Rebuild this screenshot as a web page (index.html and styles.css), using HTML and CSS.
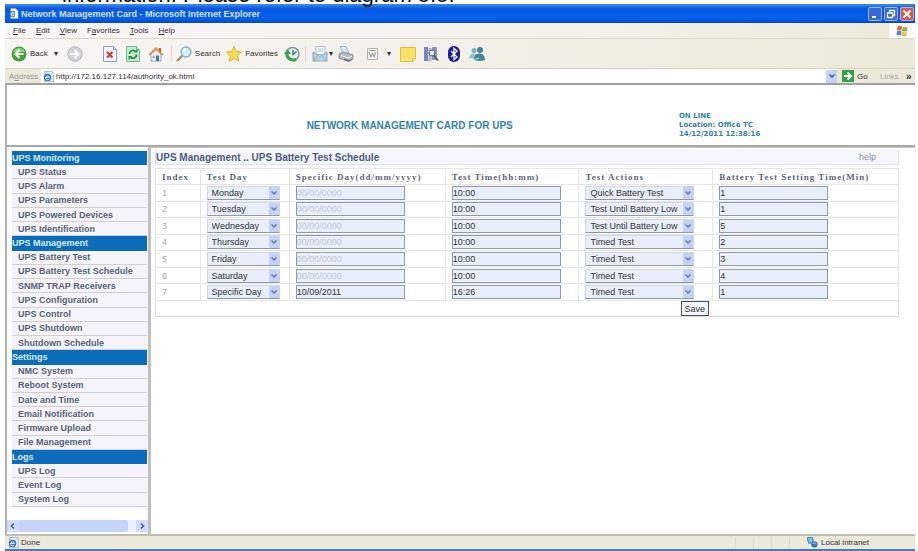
FILE: index.html
```html
<!DOCTYPE html>
<html lang="en">

<head>
    <meta charset="utf-8">
    <meta name="viewport" content="width=device-width, initial-scale=1.0">
    <title>Network Management Card</title>

    <link rel="stylesheet" href="styles.css">
</head>

<body>
    <p class="caption">information. Please refer to diagram 5.5.</p>

    <div class="window">
        <header class="titlebar">
            <svg class="icon-page" viewBox="0 0 12 12"><path d="M2 0h6l3 3v9H2z" fill="#fff"/><path d="M1 3h6v7H1z" fill="#3a7ac8"/><path d="M6 5.5a2 2 0 1 0 0 2.500M2.500 6.500h4" stroke="#fff" fill="none"/></svg>
            <h1>Network Management Card - Microsoft Internet Explorer</h1>
            <button class="win" aria-label="Minimize"><svg viewBox="0 0 12 12"><path d="M3 9h4" stroke="#fff" stroke-width="2"/></svg></button>
            <button class="win" aria-label="Restore"><svg viewBox="0 0 12 12"><path d="M4.500 4.500v-2h5v5h-2M2.500 5h5v4.500h-5z" stroke="#fff" stroke-width="1.300" fill="none"/></svg></button>
            <button class="win close" aria-label="Close"><svg viewBox="0 0 12 12"><path d="M2.500 2.500l7 7M9.500 2.500l-7 7" stroke="#fff" stroke-width="2"/></svg></button>
        </header>

        <nav class="menubar">
            <a href="#"><u>F</u>ile</a>
            <a href="#"><u>E</u>dit</a>
            <a href="#"><u>V</u>iew</a>
            <a href="#">F<u>a</u>vorites</a>
            <a href="#"><u>T</u>ools</a>
            <a href="#"><u>H</u>elp</a>
            <span class="flag"><svg viewBox="0 0 12 12"><path d="M1.500 1.500q2.500-1.500 4.500 0L5.500 5.500q-2-1.200-4.500 0z" fill="#d86a3c"/><path d="M6.500 1.800q2.500 1 5 0L11 6q-2.500 1-5 0z" fill="#8ab84a"/><path d="M1 6.200q2.500-1.200 4.500 0L5 10.500q-2-1.200-4.500 0z" fill="#5a80c8"/><path d="M6 6.800q2.500 1 5 0l-.5 4q-2.500 1-5 0z" fill="#e8c040"/></svg></span>
        </nav>

        <div class="toolbar">
            <button class="tool back"><svg viewBox="0 0 16 16"><circle cx="8" cy="8" r="7.500" fill="#3fa535"/><path d="M2 6a6.500 6.500 0 0 1 12 0z" fill="#8ed07c"/><path d="M12.500 8H5M8.500 4L4.500 8l4 4" stroke="#fff" stroke-width="2.200" fill="none"/></svg>Back</button>
            <span class="drop">▾</span>
            <button class="tool forward" aria-label="Forward"><svg viewBox="0 0 16 16"><circle cx="8" cy="8" r="7.200" fill="#d4d4d6" stroke="#b2b2b6"/><path d="M3.500 8H11M7.500 4l4 4-4 4" stroke="#fff" stroke-width="2" fill="none"/></svg></button>
            <button class="tool stop" aria-label="Stop"><svg viewBox="0 0 16 16"><path d="M1.500.500h10l3 3v12h-13z" fill="#f4f4fb" stroke="#8a9cc4"/><path d="M11.500.500v3h3" fill="#cdd8ee" stroke="#8a9cc4"/><path d="M5 6l5.500 5.500M10.500 6L5 11.500" stroke="#d23a2e" stroke-width="2.200"/></svg></button>
            <button class="tool refresh" aria-label="Refresh"><svg viewBox="0 0 16 16"><path d="M1.500.500h10l3 3v12h-13z" fill="#c9ecd0" stroke="#7ab494"/><path d="M11.500.500v3h3" fill="#eef8f0" stroke="#7ab494"/><path d="M4.500 8a3.500 3.500 0 0 1 5.500-3M11.500 8.500A3.500 3.500 0 0 1 6 11.500" stroke="#1f9240" stroke-width="1.800" fill="none"/><path d="M8.500 6.500h4v-4zM7.500 10h-4v4z" fill="#1f9240"/></svg></button>
            <button class="tool home" aria-label="Home"><svg viewBox="0 0 16 16"><path d="M3 8v7h10V8L8 3z" fill="#f0f2fa" stroke="#9aa6c8"/><path d="M11 2h2v4h-2z" fill="#c2562e"/><path d="M.500 8.500L8 1l7.500 7.500-1.500 1L8 4 2 9.500z" fill="#e08a3c"/><path d="M8 9.500h3V15H8z" fill="#4a72c0"/><path d="M4.500 9.500h2.200v2.500H4.500z" fill="#8ab4e0"/></svg></button>
            <button class="tool search"><svg viewBox="0 0 16 16"><path d="M6.500 9.500L1 15" stroke="#b08a62" stroke-width="2.400"/><circle cx="10" cy="6" r="5" fill="#d3ebfa" stroke="#8aaed0" stroke-width="1.400"/><path d="M7 5.500a3 3 0 0 1 3-2.500" stroke="#fff" stroke-width="1.500" fill="none"/></svg>Search</button>
            <button class="tool favorites"><svg viewBox="0 0 16 16"><path d="M8 .500l2.300 5 5.200.600-3.900 3.700 1.100 5.500L8 12.500l-4.700 2.800 1.100-5.500L.500 6.100l5.200-.600z" fill="#f7dc50" stroke="#dcae34"/></svg>Favorites</button>
            <button class="tool history" aria-label="History"><svg viewBox="0 0 16 16"><circle cx="8.500" cy="8" r="6.500" fill="#e2f2ee" stroke="#7a9c9c" stroke-width="1.500"/><path d="M9 4v4.500l3.500-3" stroke="#4a6a8a" stroke-width="1.300" fill="none"/><path d="M12 13.500A6.500 6.500 0 0 1 3 6.500" stroke="#3ca04c" stroke-width="3" fill="none"/><path d="M0 8l3.500-5L7 8z" fill="#3ca04c"/></svg></button>
            <button class="tool mail" aria-label="Mail"><svg viewBox="0 0 16 16"><path d="M4 .500h9v8H4z" fill="#fff" stroke="#a8bccc"/><path d="M5.500 3h6M5.500 5h6" stroke="#9cc4e0"/><path d="M1 6l7 4.500L15 6v9H1z" fill="#b9d4e6" stroke="#8aa8bc"/><path d="M1 15l5-5.500M15 15l-5-5.500" stroke="#8aa8bc"/></svg></button>
            <span class="drop small">▾</span>
            <button class="tool print" aria-label="Print"><svg viewBox="0 0 16 16"><path d="M2 .500h6l3 7H5z" fill="#d9ebfb" stroke="#9cb4d0"/><path d="M1 8l4-2 10 3v4l-5 2.500L1 12z" fill="#b4b8c0" stroke="#8a8e98"/><path d="M3 9.500l7 2.500 4-2" stroke="#fff" fill="none"/><path d="M6 13l5 2 3-1.500" stroke="#5a5e68" fill="none"/></svg></button>
            <button class="tool edit" aria-label="Edit"><svg viewBox="0 0 16 16"><path d="M3.500 2.500h10v11h-10z" fill="#f4f4f0" stroke="#b4b4b0"/><path d="M5 6l2 5 1.500-4 1.500 4 2-5M5.500 4.500h6" stroke="#8c9098" fill="none"/></svg></button>
            <span class="drop">▾</span>
            <button class="tool note" aria-label="Discuss"><svg viewBox="0 0 16 16"><path d="M.500 1.500h15v11l-3 3H.500z" fill="#fbe36a" stroke="#e0bc44"/><path d="M12.500 15.500v-3h3z" fill="#fff4b8" stroke="#e0bc44"/></svg></button>
            <button class="tool research" aria-label="Research"><svg viewBox="0 0 16 16"><path d="M1 1h4v14H1z" fill="#7a86b4"/><path d="M5.500 2h3v13h-3z" fill="#a9b0d0"/><path d="M9 1h5v13H9z" fill="#8e96b8"/><circle cx="9" cy="7" r="3" fill="#e6ecf8" stroke="#4e5888"/><path d="M11 9.500l4 5" stroke="#4e5888" stroke-width="1.800"/></svg></button>
            <button class="tool bluetooth" aria-label="Bluetooth"><svg viewBox="0 0 16 16"><rect x="2" width="12" height="16" rx="6" fill="#1c1c9c"/><path d="M5 5l6 6-3 2.500v-11L11 5l-6 6" stroke="#fff" stroke-width="1.300" fill="none"/></svg></button>
            <button class="tool messenger" aria-label="Messenger"><svg viewBox="0 0 16 16"><circle cx="5" cy="4.500" r="2.500" fill="#7cb4bc"/><path d="M0 12q1-6 7-4v5z" fill="#8fc2c8"/><circle cx="11" cy="4" r="3" fill="#3f8894"/><path d="M5 14q0-7 6-6.500 5 .500 5 6.500-5 2-11 0z" fill="#3f8894"/><path d="M1 12q5 3 9 0" stroke="#c4e4e4" fill="none"/></svg></button>
        </div>

        <form class="addressbar">
            <label for="address">A<u>d</u>dress</label>
            <div class="address">
                <svg viewBox="0 0 12 12"><path d="M2 0h7l3 3v9H2z" fill="#dce8f8" stroke="#7a9cc8"/><circle cx="5" cy="7" r="4" fill="#2c70c0"/><path d="M7 8.500a2.200 2.200 0 1 1 .200-1.500H3" stroke="#fff" fill="none"/></svg>
                <input id="address" type="text" value="http://172.16.127.114/authority_ok.html">
                <button type="button" class="pick" aria-label="Show addresses"><svg viewBox="0 0 8 8"><path d="M1.500 2.500L4 5l2.500-2.500" stroke="#445c94" stroke-width="1.500" fill="none"/></svg></button>
            </div>
            <button type="button" class="go"><svg viewBox="0 0 12 12"><path d="M0 0h12v12H0z" fill="#35a04a"/><path d="M2 6h7M5.500 2.500L9 6 5.500 9.500" stroke="#fff" stroke-width="1.800" fill="none"/></svg>Go</button>
            <a href="#" class="links">Links</a>
            <span class="more">»</span>
        </form>

        <div class="banner">
            <h2>NETWORK MANAGEMENT CARD FOR UPS</h2>
            <p>ON LINE<br>Location: Office TC<br>14/12/2011 12:38:16</p>
        </div>

        <div class="frames">
            <aside>
                <ul class="side">
                    <li class="head">UPS Monitoring</li>
                    <li><a href="#">UPS Status</a></li>
                    <li><a href="#">UPS Alarm</a></li>
                    <li><a href="#">UPS Parameters</a></li>
                    <li><a href="#">UPS Powered Devices</a></li>
                    <li><a href="#">UPS Identification</a></li>
                    <li class="head">UPS Management</li>
                    <li><a href="#">UPS Battery Test</a></li>
                    <li><a href="#">UPS Battery Test Schedule</a></li>
                    <li><a href="#">SNMP TRAP Receivers</a></li>
                    <li><a href="#">UPS Configuration</a></li>
                    <li><a href="#">UPS Control</a></li>
                    <li><a href="#">UPS Shutdown</a></li>
                    <li><a href="#">Shutdown Schedule</a></li>
                    <li class="head">Settings</li>
                    <li><a href="#">NMC System</a></li>
                    <li><a href="#">Reboot System</a></li>
                    <li><a href="#">Date and Time</a></li>
                    <li><a href="#">Email Notification</a></li>
                    <li><a href="#">Firmware Upload</a></li>
                    <li><a href="#">File Management</a></li>
                    <li class="head">Logs</li>
                    <li><a href="#">UPS Log</a></li>
                    <li><a href="#">Event Log</a></li>
                    <li><a href="#">System Log</a></li>
                </ul>
                <div class="scroll">
                    <button aria-label="Scroll left"><svg viewBox="0 0 8 8"><path d="M5 1.500L2.500 4 5 6.500" stroke="#445c94" stroke-width="1.600" fill="none"/></svg></button>
                    <span class="thumb"></span>
                    <button aria-label="Scroll right"><svg viewBox="0 0 8 8"><path d="M3 1.500L5.500 4 3 6.500" stroke="#445c94" stroke-width="1.600" fill="none"/></svg></button>
                </div>
            </aside>

            <main>
                <div class="heading">
                    <h3>UPS Management .. UPS Battery Test Schedule</h3>
                    <a href="#">help</a>
                </div>
                <table>
                    <colgroup>
                        <col class="c-index">
                        <col class="c-day">
                        <col class="c-date">
                        <col class="c-time">
                        <col class="c-action">
                        <col class="c-min">
                    </colgroup>
                    <thead>
                        <tr>
                            <th>Index</th>
                            <th>Test Day</th>
                            <th>Specific Day(dd/mm/yyyy)</th>
                            <th>Test Time(hh:mm)</th>
                            <th>Test Actions</th>
                            <th>Battery Test Setting Time(Min)</th>
                        </tr>
                    </thead>
                    <tbody id="rows"></tbody>
                    <tfoot>
                        <tr>
                            <td colspan="5" class="save"><button>Save</button></td>
                            <td></td>
                        </tr>
                    </tfoot>
                </table>
            </main>
        </div>

        <footer>
            <svg viewBox="0 0 12 12"><path d="M2 0h7l3 3v9H2z" fill="#dce8f8" stroke="#7a9cc8"/><circle cx="5" cy="7" r="4" fill="#2c70c0"/><path d="M7 8.500a2.200 2.200 0 1 1 .200-1.500H3" stroke="#fff" fill="none"/></svg>
            <span class="done">Done</span>
            <span class="pane"></span>
            <span class="pane"></span>
            <span class="pane"></span>
            <span class="pane"></span>
            <span class="zone"><svg viewBox="0 0 12 12"><path d="M0 1l6-1 1 6-5 1z" fill="#7cc0e8" stroke="#3a80b4"/><circle cx="8" cy="8" r="3.500" fill="#2c78b8"/><path d="M6 7q2-2 4 1" stroke="#bfe4f4" fill="none"/></svg>Local intranet</span>
        </footer>
    </div>

    <template>
        <tr>
            <td class="nr"></td>
            <td><select aria-label="Test Day"></select></td>
            <td><input type="text" aria-label="Specific Day"></td>
            <td><input type="text" aria-label="Test Time"></td>
            <td><select aria-label="Test Actions"></select></td>
            <td><input type="text" aria-label="Setting Time"></td>
        </tr>
    </template>

    <script>
        const schedule = [
            ["Monday", "00/00/0000", "10:00", "Quick Battery Test", "1"],
            ["Tuesday", "00/00/0000", "10:00", "Test Until Battery Low", "1"],
            ["Wednesday", "00/00/0000", "10:00", "Test Until Battery Low", "5"],
            ["Thursday", "00/00/0000", "10:00", "Timed Test", "2"],
            ["Friday", "00/00/0000", "10:00", "Timed Test", "3"],
            ["Saturday", "00/00/0000", "10:00", "Timed Test", "4"],
            ["Specific Day", "10/09/2011", "16:26", "Timed Test", "1"]
        ];
        const template = document.querySelector("template");
        const dest = document.querySelector("#rows");

        schedule.forEach((line, i) => {
            const klon = template.content.cloneNode(true);
            const [day, action] = klon.querySelectorAll("select");
            const [date, time, min] = klon.querySelectorAll("input");

            klon.querySelector(".nr").textContent = i + 1;
            day.add(new Option(line[0]));
            date.value = line[1];
            date.disabled = line[0] != "Specific Day";
            time.value = line[2];
            action.add(new Option(line[3]));
            min.value = line[4];
            dest.appendChild(klon);
        });
    </script>
</body></html>
```
FILE: styles.css
```css
* {
    box-sizing: border-box;
}

body {
    margin: 0;
    height: 100vh;
    display: flex;
    flex-direction: column;
    background: #fff;
    font-family: "Liberation Sans", Arial, sans-serif;
    font-size: 9px;
    color: #333;
    overflow: hidden;
}

h1, h2, h3, p, ul {
    margin: 0;
    padding: 0;
}

a {
    color: inherit;
    text-decoration: none;
}

button, input, select {
    font: inherit;
    color: inherit;
    margin: 0;
    padding: 0;
    border: none;
    border-radius: 0;
    background: none;
}

svg {
    display: block;
    flex: none;
}

/* last line of the paragraph above the window */
.caption {
    position: relative;
    z-index: 1;
    height: 4px;
    display: flex;
    align-items: flex-end;
    padding-left: 62px;
    font-size: 22px;
    line-height: 18px;
    color: #111;
}

.window {
    flex: 1;
    min-height: 0;
    display: flex;
    flex-direction: column;
    margin: 0 3px 0 5px;
    border-bottom: 2px solid #4a78c4;
}

/* title bar */
.titlebar {
    height: 19px;
    display: flex;
    align-items: center;
    gap: 2px;
    padding: 0 1px 0 4px;
    background: linear-gradient(#3a8cf4, #0858e0 25%, #0560f0 75%, #0348c4);
    color: #d4e4ff;
}

.titlebar h1 {
    flex: 1;
    font-size: 9px;
}

.icon-page {
    width: 10px;
    height: 11px;
}

.win {
    width: 14px;
    height: 14px;
    border: 1px solid #9cb8f4;
    border-radius: 2px;
    background: #3468dc;
}

.close {
    background: #dc5a3c;
}

/* menu */
.menubar {
    height: 16px;
    display: flex;
    align-items: center;
    gap: 10px;
    padding-left: 8px;
    background: linear-gradient(90deg, #f8f6f6, #f6f0ec 60%, #ece9d8);
    border-bottom: 1px solid #dcd8cc;
    font-size: 8px;
}

.flag {
    margin-left: auto;
    align-self: stretch;
    width: 26px;
    display: flex;
    align-items: center;
    justify-content: center;
    background: #fff;
}

.flag svg {
    width: 12px;
}

/* toolbar */
.toolbar {
    height: 30px;
    display: flex;
    align-items: center;
    padding-left: 6px;
    background: linear-gradient(90deg, #f8f6f4, #f2f0e8 50%, #ece9d8);
    border-bottom: 1px solid #d8d4c4;
    font-size: 8px;
}

.tool {
    display: flex;
    align-items: center;
    gap: 3px;
    margin-right: 7px;
}

.tool svg {
    width: 16px;
    height: 16px;
}

.back {
    margin-right: 6px;
}

.drop {
    margin-right: 7px;
    width: 6px;
}

.forward {
    margin-right: 19px;
}

.home {
    padding-right: 7px;
    border-right: 1px solid #e0dcd0;
    margin-right: 4px;
}

.search, .favorites {
    margin-right: 6px;
}

.history {
    padding-right: 5px;
    border-right: 1px solid #dcd8cc;
    margin-right: 6px;
}

.mail {
    margin-right: 1px;
}

.small {
    margin-right: 3px;
}

.print {
    margin-right: 10px;
}

/* address */
.addressbar {
    height: 14px;
    display: flex;
    align-items: center;
    padding-left: 4px;
    background: #ece9d8;
    font-size: 8px;
}

.addressbar label {
    width: 32px;
    color: #999;
}

.address {
    flex: 1;
    align-self: stretch;
    display: flex;
    align-items: center;
    gap: 2px;
    padding-left: 2px;
    background: #fff;
}

.address > svg {
    width: 11px;
    height: 11px;
}

.address input {
    flex: 1;
}

.pick {
    width: 11px;
    height: 13px;
    background: #c4d2f8;
}

.go {
    width: 43px;
    display: flex;
    align-items: center;
    gap: 3px;
    padding-left: 5px;
}

.go svg {
    width: 12px;
    height: 12px;
}

.links {
    width: 26px;
    color: #aaa;
}

.more {
    width: 9px;
    font-size: 10px;
    font-weight: bold;
}

/* top frame */
.banner {
    height: 62px;
    display: grid;
    grid-template-columns: 33% 1fr 26%;
    align-items: center;
    border-top: 2px solid #a0a0a0;
    border-left: 2px solid #b0b0b0;
    color: #3484a8;
    padding-top: 20px;
}

.banner h2 {
    grid-column: 2;
    font-size: 10px;
}

.banner p {
    font-family: "DejaVu Sans", Verdana, sans-serif;
    font-size: 7px;
    font-weight: bold;
    line-height: 9px;
}

.frames {
    flex: 1;
    min-height: 0;
    display: flex;
    border-top: 2px solid #a8a8a8;
    border-left: 2px solid #b0b0b0;
}

/* left menu */
aside {
    width: 144px;
    display: flex;
    flex-direction: column;
    border-right: 3px solid #c0c0c0;
    padding: 4px 0 2px;
}

.side {
    flex: 1;
    margin: 0 1px 13px 5px;
    display: flex;
    flex-direction: column;
    list-style: none;
    font-weight: bold;
    color: #56627c;
}

.side li {
    flex: 1;
    display: flex;
    align-items: center;
    padding-left: 6px;
    background: #f6f4fb;
    border-bottom: 1px solid #d0d0dc;
}

.side .head {
    padding-left: 0;
    background: #0c6cbc;
    border-color: #0c6cbc;
    color: #d8ecff;
}

.scroll {
    height: 12px;
    display: flex;
    background: #eef0fc;
}

.scroll button {
    width: 12px;
    background: #d0dcfc;
}

.scroll svg, .pick svg {
    width: 8px;
    margin: auto;
}

.thumb {
    flex: 1;
    margin-right: 8px;
    border-radius: 2px;
    background: #c6d4fc;
}

/* schedule */
main {
    flex: 1;
    padding: 2px 16px 0 4px;
    border-top: 1px solid #c8c8cc;
}

.heading {
    height: 15px;
    display: flex;
    justify-content: space-between;
    align-items: center;
    padding: 0 22px 0 0;
    margin-bottom: 3px;
    background: #f4f7fd;
    border: 1px solid #dde2ee;
    border-top: none;
    color: #8890a4;
}

.heading h3 {
    font-size: 10px;
    color: #4c5c84;
}

table {
    width: 100%;
    height: 149px;
    table-layout: fixed;
    border-collapse: collapse;
    border: 1px solid #dcdcdc;
}

.c-index {
    width: 6%;
}

.c-day {
    width: 12%;
}

.c-date {
    width: 21%;
}

.c-time, .c-action {
    width: 18%;
}

.c-min {
    width: 25%;
}

th, td {
    height: 16px;
    padding: 0 0 0 6px;
    border: 1px solid #e6e6e6;
    text-align: left;
    vertical-align: middle;
    white-space: nowrap;
}

th {
    font-family: "Liberation Serif", "Times New Roman", serif;
    font-size: 9px;
    letter-spacing: 1px;
    color: #606878;
}

.nr {
    color: #aaa;
}

td input, td select {
    display: block;
    width: 109px;
    height: 14px;
    background-color: #e8effb;
    border: 1px solid #8c9cb0;
}

td input:disabled {
    color: #c4c8d0;
}

td select {
    appearance: none;
    padding-left: 4px;
    border-color: #d0d8e8 #d0d8e8 #8c9cb0;
    background-image: url("data:image/svg+xml,%3Csvg xmlns='http://www.w3.org/2000/svg' viewBox='0 0 10 12'%3E%3Cpath d='M0 0h10v12H0z' fill='%23c4d2f8'/%3E%3Cpath d='M2.500 4.500L5 7l2.500-2.500' stroke='%23607cb4' stroke-width='1.500' fill='none'/%3E%3C/svg%3E");
    background-repeat: no-repeat;
    background-position: right center;
    background-size: 10px 12px;
}

td:nth-child(2) select {
    width: 73px;
}

tfoot td {
    border: none;
}

.save {
    padding-right: 4px;
}

.save button {
    display: block;
    margin-left: auto;
    width: 28px;
    height: 15px;
    background: #f4f7fd;
    border: 1px solid #44546c;
}

/* status bar */
footer {
    height: 15px;
    display: flex;
    align-items: center;
    padding-left: 3px;
    background: #ece9d8;
    border-top: 2px solid #c0beb0;
    font-size: 8px;
}

footer svg {
    width: 11px;
    height: 11px;
}

.done {
    flex: 1;
    padding-left: 2px;
}

.pane {
    width: 18px;
    height: 11px;
    border-left: 1px solid #dcd8c8;
}

.zone {
    width: 108px;
    display: flex;
    align-items: center;
    gap: 3px;
}
```
